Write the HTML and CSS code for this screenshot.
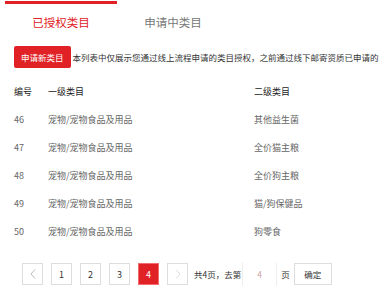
FILE: index.html
```html
<!DOCTYPE html>
<html lang="zh-CN">
<head>
  <meta charset="UTF-8">
  <title>已授权类目</title>
  <meta name="viewport" content="width=device-width">
  <link rel="stylesheet" href="styles.css">
</head>
<body>
<div class="tabs">
  <div class="tab active">已授权类目</div>
  <div class="tab">申请中类目</div>
</div>

<div class="toolbar">
  <button class="applyBtn">申请新类目</button>
  <div class="note">本列表中仅展示您通过线上流程申请的类目授权，之前通过线下邮寄资质已申请的类目请联系对接人查询</div>
</div>

<div class="table">
  <div class="row head">
    <div>编号</div>
    <div>一级类目</div>
    <div>二级类目</div>
  </div>
  <div class="row">
    <div>46</div>
    <div>宠物/宠物食品及用品</div>
    <div>其他益生菌</div>
  </div>
  <div class="row">
    <div>47</div>
    <div>宠物/宠物食品及用品</div>
    <div>全价猫主粮</div>
  </div>
  <div class="row">
    <div>48</div>
    <div>宠物/宠物食品及用品</div>
    <div>全价狗主粮</div>
  </div>
  <div class="row">
    <div>49</div>
    <div>宠物/宠物食品及用品</div>
    <div>猫/狗保健品</div>
  </div>
  <div class="row">
    <div>50</div>
    <div>宠物/宠物食品及用品</div>
    <div>狗零食</div>
  </div>
</div>

<div class="pager">
  <a class="page arrow"><svg width="6" height="10" viewBox="0 0 6 10"><path d="M5 0.5 L1 5 L5 9.5" fill="none" stroke="#bbb" stroke-width="1"/></svg></a>
  <a class="page">1</a>
  <a class="page">2</a>
  <a class="page">3</a>
  <a class="page current">4</a>
  <a class="page arrow"><svg width="6" height="10" viewBox="0 0 6 10"><path d="M1 0.5 L5 5 L1 9.5" fill="none" stroke="#ddd" stroke-width="1"/></svg></a>
  <span class="total">共4页，去第</span>
  <input class="goto" value="4">
  <span class="unit">页</span>
  <button class="confirm">确定</button>
</div>
</body>
</html>
```

FILE: styles.css
```css
body {
  font-family: "Noto Sans CJK SC", "Noto Sans", sans-serif;
  margin: 0;
  padding: 0;
  background: #fff;
  color: #333;
}

.tabs {
  display: flex;
  padding-left: 5px;
  margin-top: 1px;
}

.tab {
  width: 112px;
  border-top: 3px solid transparent;
  padding-top: 10px;
  font-size: 11.5px;
  line-height: 16px;
  text-align: center;
  color: #777;
}

.tab.active {
  border-top-color: #e02125;
  color: #e02125;
}

.toolbar {
  display: flex;
  align-items: center;
  padding-left: 14px;
  margin-top: 16px;
  white-space: nowrap;
  overflow: hidden;
}

.applyBtn {
  font-family: inherit;
  font-size: 8.5px;
  height: 22px;
  padding: 0 7px;
  border: 0;
  border-radius: 2px;
  background: #e02125;
  color: #fff;
  flex-shrink: 0;
}

.note {
  margin-left: 2px;
  font-size: 8.5px;
  color: #333;
}

.table {
  margin-top: 9px;
  padding-left: 14px;
}

.row {
  display: grid;
  grid-template-columns: 34px 206px 1fr;
  height: 28px;
  align-items: center;
  font-size: 9px;
  color: #666;
}

.row.head {
  color: #222;
}

.pager {
  display: flex;
  align-items: center;
  gap: 8px;
  padding-left: 22px;
  margin-top: 17px;
  font-size: 9px;
}

.page {
  width: 21px;
  height: 22px;
  box-sizing: border-box;
  border: 1px solid #ddd;
  display: flex;
  align-items: center;
  justify-content: center;
  color: #333;
}

.page.current {
  background: #e02125;
  border-color: #f26b6e;
  color: #fff;
}

.total {
  margin-left: -2px;
  font-size: 8.5px;
}

.goto {
  width: 35px;
  height: 24px;
  box-sizing: border-box;
  margin-left: -7px;
  border: 1px solid #eee;
  border-top-color: #fff;
  border-bottom-color: #fff;
  text-align: center;
  font-family: inherit;
  font-size: 8.5px;
  color: #c9a3a3;
  padding: 0;
}

.unit {
  margin-left: -4px;
  font-size: 8.5px;
}

.confirm {
  margin-left: -4px;
  width: 38px;
  height: 22px;
  border: 1px solid #ddd;
  background: #fff;
  font-family: inherit;
  font-size: 8.5px;
  color: #333;
  padding: 0;
}
```
